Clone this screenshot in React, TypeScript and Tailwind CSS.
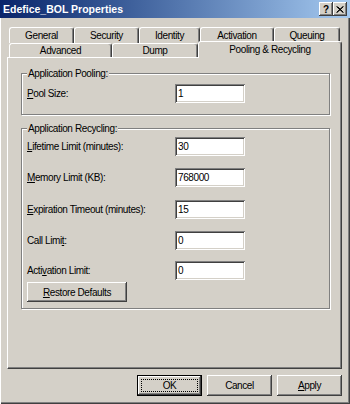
import React from 'react';

const raised = 'shadow-[inset_-1px_-1px_#404040,inset_1px_1px_#ffffff,inset_-2px_-2px_#808080]';
const sunken = 'shadow-[inset_1px_1px_#808080,inset_-1px_-1px_#ffffff,inset_2px_2px_#404040,inset_-2px_-2px_#d4d0c8]';

function Tab({ label, className = '' }: { label: string; className?: string }) {
  return (
    <div
      className={`flex items-center justify-center rounded-t-[3px] border-t border-l border-r border-t-white border-l-white border-r-[#404040] bg-[#d4d0c8] shadow-[inset_-1px_0_#808080] ${className}`}
    >
      {label}
    </div>
  );
}

function Field({ label, value, className = '' }: { label: React.ReactNode; value: string; className?: string }) {
  return (
    <div className={`flex h-[19px] items-center ${className}`}>
      <div className="w-[148px]">{label}</div>
      <div className={`flex h-[19px] w-[70px] items-center bg-white pl-[3px] ${sunken}`}>{value}</div>
    </div>
  );
}

function Button({ children, isDefault = false }: { children: React.ReactNode; isDefault?: boolean }) {
  if (isDefault) {
    return (
      <div className="relative flex h-[21px] w-[65px] items-center justify-center border border-black">
        <div className={`absolute inset-0 ${raised}`} />
        <div className="absolute inset-[3px] border border-dotted border-black" />
        <span className="relative">{children}</span>
      </div>
    );
  }
  return <div className={`flex h-[21px] w-[65px] items-center justify-center ${raised}`}>{children}</div>;
}

export default function App() {
  return (
    <div className="h-[404px] w-[350px] overflow-hidden bg-[#d4d0c8] font-['Liberation_Sans',Arial,sans-serif] text-[10px] leading-[13px] tracking-[-0.4px] text-black shadow-[inset_1px_0_#ffffff,inset_-1px_-1px_#404040,inset_-2px_-2px_#808080]">
      {/* title bar */}
      <div className="flex h-[18px] items-center bg-linear-to-r from-[#0a246a] to-[#a6caf0] pl-[3px] pr-[3px]">
        <span className="flex-1 text-[10.5px] font-bold tracking-normal text-white">Edefice_BOL Properties</span>
        <div className={`flex h-[14px] w-[14px] items-center justify-center bg-[#d4d0c8] font-bold tracking-normal ${raised}`}>?</div>
        <div className={`flex h-[14px] w-[14px] items-center justify-center bg-[#d4d0c8] ${raised}`}>
          <svg width="8" height="7" viewBox="0 0 8 7">
            <path d="M0.5 0.5 L7 6.5 M1.5 0.5 L7.5 6.5 M7 0.5 L0.5 6.5 M7.5 0.5 L1 6.5" stroke="#000" strokeWidth="1" />
          </svg>
        </div>
      </div>

      {/* tabs */}
      <div className="flex pl-[9px] pt-[9px]">
        <Tab label="General" className="h-[16px] w-[65px]" />
        <Tab label="Security" className="h-[16px] w-[65px]" />
        <Tab label="Identity" className="h-[16px] w-[61px]" />
        <Tab label="Activation" className="h-[16px] w-[74px]" />
        <Tab label="Queuing" className="h-[16px] w-[66px]" />
      </div>
      <div className="flex h-[14px] pl-[9px]">
        <Tab label="Advanced" className="h-[14px] w-[103px]" />
        <Tab label="Dump" className="h-[14px] w-[86px]" />
        <Tab label="Pooling & Recycling" className="relative z-10 -mt-[2px] h-[17px] w-[144px] pb-[2px]" />
      </div>

      {/* panel */}
      <div className="ml-[7px] h-[312px] w-[335px] border border-t-white border-l-white border-r-[#404040] border-b-[#404040] pl-[13px] pt-[15px] shadow-[inset_-1px_-1px_#808080]">
        <div className="relative h-[42px] w-[309px] border border-[#808080] pl-[5px] pt-[10px] shadow-[inset_1px_1px_#ffffff,1px_1px_#ffffff]">
          <span className="absolute -top-[7px] left-[5px] bg-[#d4d0c8] px-[1px]">Application Pooling:</span>
          <Field label={<><span className="underline">P</span>ool Size:</>} value="1" />
        </div>

        <div className="relative mt-[13px] h-[181px] w-[309px] border border-[#808080] pl-[5px] pt-[8px] shadow-[inset_1px_1px_#ffffff,1px_1px_#ffffff]">
          <span className="absolute -top-[7px] left-[5px] bg-[#d4d0c8] px-[1px]">Application Recycling:</span>
          <Field label={<><span className="underline">L</span>ifetime Limit (minutes):</>} value="30" />
          <Field className="mt-[12px]" label={<><span className="underline">M</span>emory Limit (KB):</>} value="768000" />
          <Field className="mt-[13px]" label={<><span className="underline">E</span>xpiration Timeout (minutes):</>} value="15" />
          <Field className="mt-[12px]" label={<>Call Limi<span className="underline">t</span>:</>} value="0" />
          <Field className="mt-[11px]" label={<>Acti<span className="underline">v</span>ation Limit:</>} value="0" />
          <div className={`mt-[2px] flex h-[20px] w-[100px] items-center justify-center ${raised}`}>
            <span><span className="underline">R</span>estore Defaults</span>
          </div>
        </div>
      </div>

      {/* buttons */}
      <div className="mt-[6px] flex justify-end gap-[5px] pr-[8px]">
        <Button isDefault>OK</Button>
        <Button>Cancel</Button>
        <Button><span><span className="underline">A</span>pply</span></Button>
      </div>
    </div>
  );
}
